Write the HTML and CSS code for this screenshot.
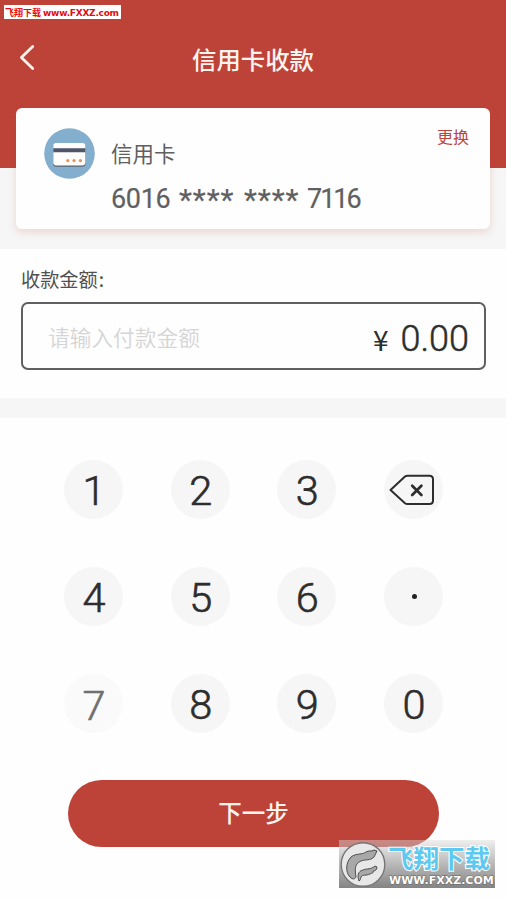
FILE: index.html
```html
<!DOCTYPE html>
<html lang="zh-CN">
<head>
<meta charset="utf-8">
<title>信用卡收款</title>
<link rel="stylesheet" href="styles.css">
</head>
<body>
<div class="site-tag">飞翔下载 <span class="tag-url">www.FXXZ.com</span></div>
<header class="top">
  <nav class="nav">
    <svg class="back" width="18" height="28" viewBox="0 0 18 28" fill="none" stroke="#fff3ee" stroke-width="2.8" stroke-linecap="round" stroke-linejoin="round"><path d="M14.7 3.4 3.4 14.5l11.3 11.1"/></svg>
    <h1 class="title">信用卡收款</h1>
  </nav>
</header>
<section class="card-area">
  <div class="card">
    <svg class="card-icon" width="51" height="51" viewBox="0 0 51 51">
      <circle cx="25.5" cy="25.5" r="25.3" fill="#83aecd"/>
      <rect x="9.3" y="16" width="32" height="22.8" rx="2.8" fill="#59636e"/>
      <rect x="9.3" y="15" width="32" height="22.4" rx="2.8" fill="#fffdfb"/>
      <path fill="#4e5669" d="M9.3 20.3h32v4h-32z"/>
      <g fill="#df945f"><circle cx="23.8" cy="32.6" r="1.6"/><circle cx="30" cy="32.6" r="1.6"/><circle cx="36.4" cy="32.6" r="1.6"/></g>
    </svg>
    <div class="card-info">
      <div class="card-name">信用卡</div>
      <div class="card-number"><span class="head">6016</span><span class="mask">****</span><span class="mask">****</span><span class="tail">7116</span></div>
    </div>
    <div class="change">更换</div>
  </div>
</section>
<section class="amount">
  <div class="amount-label">收款金额<span>:</span></div>
  <div class="amount-box">
    <span class="hint">请输入付款金额</span>
    <span class="yen">¥</span>
    <span class="value">0.00</span>
  </div>
</section>
<main class="pad-area">
  <div class="pad">
    <div class="key">1</div><div class="key">2</div><div class="key">3</div>
    <div class="key"><svg class="delete" width="48" height="34" viewBox="0 0 48 34" fill="none" stroke="#2d2d2d" stroke-width="2" stroke-linejoin="round"><path d="M2.5 17 17 3.5Q18 2.7 19.5 2.7H41.5Q45 2.7 45 6.2V27.8Q45 31 41.5 31H19.5Q18 31 17 30.2Z"/><path d="m24.2 12.8 9.2 9.2m0-9.2L24.2 22" stroke-width="2.7" stroke-linecap="round"/></svg></div>
    <div class="key">4</div><div class="key">5</div><div class="key">6</div><div class="key"><i class="dot"></i></div>
    <div class="key pressed">7</div><div class="key">8</div><div class="key">9</div><div class="key">0</div>
  </div>
  <div class="next">下一步</div>
</main>
<div class="watermark">
  <svg class="mark" width="48" height="48" viewBox="0 0 48 48">
    <circle cx="24" cy="24.5" r="21.8" fill="#e8e8e8" stroke="#777" stroke-width="1.4"/>
    <g fill="#a8a8a8" stroke="#4e4e4e" stroke-width="1" stroke-linejoin="round">
      <path d="M11 37C6 32 7 22 12 17c5-4 11-2 15-5 3-2 5 0 8-2l3 1-3 6c-4 4-8 2-13 4-7 3-6 9-5 16-1 2-3 3-6 0Z"/>
      <path d="M20 41c-2-5-1-10 4-11 5-2 7 0 12-4l2 1c0 3-2 4-4 4 1 2-1 2-3 3-4 2-7 0-9 3-1 2 0 3-2 4Z"/>
    </g>
  </svg>
  <div class="mark-text">
    <div class="mark-name">飞翔下载</div>
    <div class="mark-url">WWW.FXXZ.COM</div>
  </div>
</div>
</body>
</html>
```
FILE: styles.css
```css
* { box-sizing: border-box; }
body {
  margin: 0;
  width: 506px;
  height: 900px;
  overflow: hidden;
  position: relative;
  background: #fefefe;
  color: #2d2d2d;
  font-family: Roboto, "Noto Sans CJK SC", sans-serif;
}
.site-tag {
  position: absolute;
  left: 4px;
  top: 5px;
  width: 117px;
  height: 14px;
  padding-left: 1px;
  background: #fff;
  color: #e60b12;
  font: bold 9px/15px "Noto Sans CJK SC", sans-serif;
  white-space: nowrap;
}
.tag-url { font: bold 9px/14px "DejaVu Sans", sans-serif; letter-spacing: -0.25px; }
.top { height: 168px; padding-top: 36px; background: #bd4339; }
.nav { display: grid; grid-template-columns: 100px 1fr 100px; align-items: center; height: 46px; }
.back { margin: -4px 0 0 18px; }
.title { margin: 0; text-align: center; color: #fff3ee; font: 500 24.4px/46px "Noto Sans CJK SC", sans-serif; }
.card-area { height: 81px; padding: 0 16px; background: #f6f6f6; }
.card {
  position: relative;
  display: flex;
  height: 121px;
  top: -60px;
  padding: 20px 21px 0 28px;
  border-radius: 6px;
  background: #fefefe;
  box-shadow: 0 3px 9px rgba(190, 67, 57, 0.18);
}
.card-info { flex: 1; margin-left: 16px; color: #606060; }
.card-name { margin-top: 8px; font: 400 21.5px/34px "Noto Sans CJK SC", sans-serif; }
.card-number { display: flex; margin-top: 14px; font-size: 27px; line-height: 31px; -webkit-text-stroke: 0.2px; }
.head { width: 60px; letter-spacing: -0.3px; }
.mask { width: 65px; padding-left: 8px; font: 400 30px/31px Roboto, sans-serif; letter-spacing: 0.9px; }
.tail { margin-left: 6px; letter-spacing: -2px; }
.change { color: #bd4339; font: 400 16px/16px "Noto Sans CJK SC", sans-serif; }
.amount { height: 149px; padding: 17px 20px 0 21px; }
.amount-label { color: #505050; font: 400 19.2px/26px "Noto Sans CJK SC", sans-serif; }
.amount-label span { margin-left: 1px; }
.amount-box {
  display: flex;
  align-items: center;
  height: 68px;
  margin-top: 10px;
  padding: 1px 15px 0 25px;
  border: 2px solid #606060;
  border-radius: 7px;
}
.hint { flex: 1; color: #d5d5d5; font: 350 21.7px/30px "Noto Sans CJK SC", sans-serif; }
.yen { margin: 5px 12px 0 0; font: 400 28px/30px "Noto Sans CJK SC", sans-serif; }
.value { margin-top: 5px; font: 300 36px/40px Roboto, sans-serif; -webkit-text-stroke: 0.5px; }
.pad-area { padding: 42px 0 0 64px; border-top: 20px solid #f6f6f6; }
.pad { display: grid; grid-template-columns: repeat(4, 59px); gap: 48px 47.7px; }
.key {
  display: flex;
  align-items: center;
  justify-content: center;
  height: 59px;
  padding: 1px 0 0 1px;
  border-radius: 50%;
  background: #f6f6f6;
  font: 300 41.5px/59px Roboto, sans-serif;
  -webkit-text-stroke: 0.6px;
}
.delete { flex: none; margin: 0 5px 0 0; }
.dot { width: 5px; height: 5px; margin: -2px 0 0 1px; border-radius: 50%; background: #222; }
.pressed { padding-top: 4px; background: #fafafa; color: #707070; }
.next {
  width: 371px;
  height: 67px;
  margin: 47px 0 0 4px;
  border-radius: 34px;
  background: #bd4339;
  color: #fff3ee;
  text-align: center;
  font: 500 23.5px/64px "Noto Sans CJK SC", sans-serif;
}
.watermark {
  position: absolute;
  left: 339px;
  top: 840px;
  display: flex;
  width: 156px;
  height: 48px;
  background: linear-gradient(rgba(220, 220, 220, 0.45), rgba(125, 125, 125, 0.95));
}
.mark { flex: none; }
.mark-text { white-space: nowrap; }
.mark-name {
  height: 35px;
  margin-left: 1px;
  color: #5ec9f0;
  font: 700 25.5px/34px "Noto Sans CJK SC", sans-serif;
  -webkit-text-stroke: 2px #fff;
  paint-order: stroke fill;
}
.mark-url {
  margin-left: 2px;
  color: #fff;
  font: bold 11px/11px "DejaVu Sans", sans-serif;
  -webkit-text-stroke: 1px #666;
  paint-order: stroke fill;
}
```
